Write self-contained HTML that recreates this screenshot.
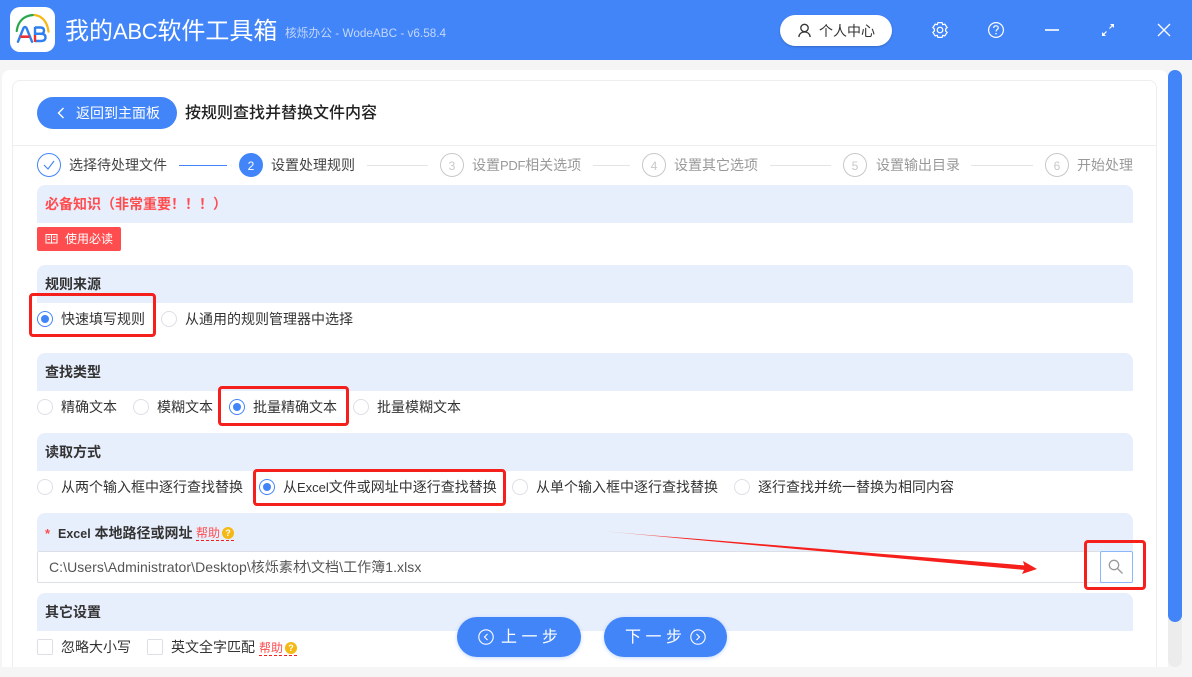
<!DOCTYPE html>
<html lang="zh">
<head>
<meta charset="utf-8">
<title>我的ABC软件工具箱</title>
<style>
html,body{margin:0;padding:0;width:1192px;height:677px;overflow:hidden;background:#f5f5f5}
body{position:relative;font-family:"Liberation Sans","Noto Sans CJK SC",sans-serif;color:#333;font-size:14px}
.a{position:absolute}
.t{position:absolute;white-space:nowrap;line-height:20px;height:20px}
.sec{position:absolute;left:37px;width:1096px;height:38px;background:#e8effc;border-radius:8px 8px 0 0}
.h{font-weight:bold;color:#333;font-size:14px}
.r{position:absolute;width:14px;height:14px;border:1px solid #dcdfe6;border-radius:50%;background:#fff}
.r.on{border-color:#4285f9}
.r.on:after{content:"";position:absolute;left:3px;top:3px;width:8px;height:8px;border-radius:50%;background:#4285f9}
.c{position:absolute;width:24px;height:24px;box-sizing:border-box;border:1px solid #c8c8c8;border-radius:50%;top:153px;color:#c8c8c8;font-size:12px;text-align:center;line-height:24px}
.l{position:absolute;top:165px;height:1px;background:#e4e4e4}
.g{color:#999}
.box{position:absolute;border:3px solid #f5201c;border-radius:4px;box-sizing:border-box}
.cb{position:absolute;top:639px;width:14px;height:14px;border:1px solid #dcdfe6;border-radius:2px;background:#fff}
.help{color:#ff4d4f;font-size:12px}
.dash{position:absolute;width:38px;height:0;border-top:1px dashed #f5201c}
.q{position:absolute;width:12px;height:12px;border-radius:50%;background:#f5b914;color:#fff;font-size:9px;font-weight:bold;text-align:center;line-height:12px}
.btn{position:absolute;top:617px;height:40px;border-radius:20px;background:#4285f9;color:#fff;box-shadow:0 1px 4px rgba(66,133,249,.3)}
.bt{font-size:16px;color:#fff;letter-spacing:4.5px}
</style>
</head>
<body>
<div class="a" style="left:0;top:0;width:1192px;height:60px;background:#4285f9"></div>
<svg class="a" style="left:10px;top:7px" width="45" height="46" viewBox="0 0 45 46">
<rect x="0" y="0" width="45" height="45" rx="10" fill="#fff"/>
<path d="M6.700 24C8 14 14 8.800 23 8" fill="none" stroke="#27a84a" stroke-width="2.200" stroke-linecap="round"/>
<path d="M24.500 8C32 8.800 37.500 15 38.500 24.700" fill="none" stroke="#f4b714" stroke-width="2.200" stroke-linecap="round"/>
<path d="M8 34.700L13.500 21Q15 19 16.500 21L22 34.700" fill="none" stroke="#2f7fee" stroke-width="2.400" stroke-linecap="round"/>
<path d="M10.500 29.700H19.500" fill="none" stroke="#ef2f2f" stroke-width="2.600"/>
<path d="M25 20.500H30.500Q34 20.500 34 23.800Q34 26.800 30.500 26.800H25" fill="none" stroke="#2f7fee" stroke-width="2.400"/>
<path d="M25 26.800H31Q35.500 26.800 35.500 30.300Q35.500 34 31 34H25" fill="none" stroke="#2f7fee" stroke-width="2.400"/>
<path d="M25 20V28" stroke="#2f7fee" stroke-width="2.400"/>
<path d="M25 28V35" stroke="#ef2f2f" stroke-width="2.400"/>
</svg>
<div class="t" style="left:65px;top:17px;height:30px;line-height:30px;font-size:24px;color:#fff">我的<span style="font-size:22px;letter-spacing:-.3px">ABC</span>软件工具箱</div>
<div class="t" style="left:285px;top:24px;font-size:11.750px;color:#c3d7fc">核烁办公 - WodeABC - v6.58.4</div>

<div class="a" style="left:780px;top:15px;width:112px;height:31px;background:#fff;border-radius:16px;box-shadow:0 1px 2px rgba(0,0,0,.2)"></div>
<svg class="a" style="left:797px;top:23px" width="15" height="15" viewBox="0 0 15 15" fill="none" stroke="#333" stroke-width="1.300"><circle cx="7.500" cy="5" r="3.700"/><path d="M1.800 14C2.200 10.800 4.500 9 7.500 9S12.800 10.800 13.200 14"/></svg>
<div class="t" style="left:819px;top:21px;font-size:14px;color:#333">个人中心</div>

<svg class="a" style="left:931px;top:21px" width="18" height="18" viewBox="0 0 18 18" fill="none" stroke="#fff" stroke-width="1.200" stroke-linejoin="round"><path d="M6.900 1.600H11.100L11.700 3.700L13.800 3.100L16.200 6.600L14.600 8V10L16.200 11.400L13.800 14.900L11.700 14.300L11.100 16.400H6.900L6.300 14.300L4.200 14.900L1.800 11.400L3.400 10V8L1.800 6.600L4.200 3.100L6.300 3.700Z"/><circle cx="9" cy="9" r="2.800"/></svg>
<svg class="a" style="left:987px;top:21px" width="18" height="18" viewBox="0 0 18 18" fill="none" stroke="#fff" stroke-width="1.200"><circle cx="9" cy="9" r="7.400"/><path d="M6.700 7C6.700 5.600 7.700 4.800 9 4.800C10.400 4.800 11.300 5.700 11.300 6.800C11.300 8.400 9 8.500 9 10.500"/><path d="M9 12V13.300" stroke-width="1.400"/></svg>
<div class="a" style="left:1045px;top:29px;width:14px;height:2px;background:#dce7fd"></div>
<svg class="a" style="left:1101px;top:23px" width="14" height="14" viewBox="0 0 14 14" fill="#fff" stroke="#fff"><path d="M2 12L5.500 8.500" stroke-width="1.200"/><path d="M8.500 5.500L12 2" stroke-width="1.200"/><path d="M1 9V13H5Z" stroke="none"/><path d="M9 1H13V5Z" stroke="none"/></svg>
<svg class="a" style="left:1157px;top:23px" width="14" height="14" viewBox="0 0 14 14" fill="none" stroke="#fff" stroke-width="1.300"><path d="M1 1L13 13M13 1L1 13"/></svg>

<div class="a" style="left:2px;top:70px;width:1166px;height:597px;background:#fff;border-radius:8px 8px 0 0"></div>
<div class="a" style="left:12px;top:80px;width:1145px;height:600px;box-sizing:border-box;border:1px solid #eee;border-radius:8px;background:#fff"></div>
<div class="a" style="left:0;top:667px;width:1192px;height:10px;background:#f5f5f5"></div>
<div class="a" style="left:13px;top:145px;width:1143px;height:1px;background:#eee"></div>

<div class="a" style="left:1168px;top:600px;width:14px;height:67px;background:#ececec;border-radius:0 0 7px 7px"></div>
<div class="a" style="left:1168px;top:70px;width:14px;height:552px;background:#4285f9;border-radius:7px"></div>

<div class="a" style="left:37px;top:97px;width:140px;height:32px;background:#4285f9;border-radius:16px"></div>
<svg class="a" style="left:56px;top:107px" width="10" height="12" viewBox="0 0 10 12" fill="none" stroke="#fff" stroke-width="1.400"><path d="M7.500 1L2.500 6L7.500 11"/></svg>
<div class="t" style="left:76px;top:103px;font-size:14px;color:#fff">返回到主面板</div>
<div class="t" style="left:185px;top:104px;font-size:16px;color:#222;font-weight:500">按规则查找并替换文件内容</div>

<div class="c" style="left:37px;border-color:#4285f9"></div>
<svg class="a" style="left:42px;top:159px" width="14" height="12" viewBox="0 0 14 12" fill="none" stroke="#4285f9" stroke-width="1.100"><path d="M2 6L6 10L12 2"/></svg>
<div class="t" style="left:69px;top:155px;color:#444">选择待处理文件</div>
<div class="l" style="left:179px;width:48px;background:#4285f9"></div>
<div class="c" style="left:239px;background:#4285f9;border-color:#4285f9;color:#fff">2</div>
<div class="t" style="left:271px;top:155px;color:#444">设置处理规则</div>
<div class="l" style="left:367px;width:61px"></div>
<div class="c" style="left:440px">3</div>
<div class="t g" style="left:472px;top:155px">设置<span style="font-size:13px;letter-spacing:-.3px">PDF</span>相关选项</div>
<div class="l" style="left:593px;width:37px"></div>
<div class="c" style="left:642px">4</div>
<div class="t g" style="left:674px;top:155px">设置其它选项</div>
<div class="l" style="left:770px;width:61px"></div>
<div class="c" style="left:843px">5</div>
<div class="t g" style="left:876px;top:155px">设置输出目录</div>
<div class="l" style="left:971px;width:62px"></div>
<div class="c" style="left:1045px">6</div>
<div class="t g" style="left:1077px;top:155px">开始处理</div>

<div class="sec" style="top:185px"></div>
<div class="t h" style="left:45px;top:194px;color:#ff4d4f">必备知识（非常重要！！！）</div>
<div class="a" style="left:37px;top:227px;width:84px;height:24px;background:#ff4d4f;border-radius:2px"></div>
<svg class="a" style="left:45px;top:233px" width="13" height="12" viewBox="0 0 13 12" fill="none" stroke="#fff" stroke-width="1"><path d="M1 1.500H6.500V10H1ZM6.500 1.500H12V10H6.500ZM2.500 4H5M2.500 6.500H5M8 4H10.500M8 6.500H10.500"/></svg>
<div class="t" style="left:65px;top:229px;font-size:12px;color:#fff">使用必读</div>

<div class="sec" style="top:265px"></div>
<div class="t h" style="left:45px;top:274px">规则来源</div>
<div class="r on" style="left:37px;top:311px"></div>
<div class="t" style="left:61px;top:309px">快速填写规则</div>
<div class="r" style="left:161px;top:311px"></div>
<div class="t" style="left:185px;top:309px">从通用的规则管理器中选择</div>

<div class="sec" style="top:353px"></div>
<div class="t h" style="left:45px;top:362px">查找类型</div>
<div class="r" style="left:37px;top:399px"></div>
<div class="t" style="left:61px;top:397px">精确文本</div>
<div class="r" style="left:133px;top:399px"></div>
<div class="t" style="left:157px;top:397px">模糊文本</div>
<div class="r on" style="left:229px;top:399px"></div>
<div class="t" style="left:253px;top:397px">批量精确文本</div>
<div class="r" style="left:353px;top:399px"></div>
<div class="t" style="left:377px;top:397px">批量模糊文本</div>

<div class="sec" style="top:433px"></div>
<div class="t h" style="left:45px;top:442px">读取方式</div>
<div class="r" style="left:37px;top:479px"></div>
<div class="t" style="left:61px;top:477px">从两个输入框中逐行查找替换</div>
<div class="r on" style="left:259px;top:479px"></div>
<div class="t" style="left:283px;top:477px">从<span style="font-size:13px">Excel</span>文件或网址中逐行查找替换</div>
<div class="r" style="left:512px;top:479px"></div>
<div class="t" style="left:536px;top:477px">从单个输入框中逐行查找替换</div>
<div class="r" style="left:734px;top:479px"></div>
<div class="t" style="left:758px;top:477px">逐行查找并统一替换为相同内容</div>

<div class="sec" style="top:513px"></div>
<div class="t" style="left:45px;top:524px;color:#ff4d4f;font-size:13px;font-weight:bold">*</div>
<div class="t h" style="left:58px;top:523px"><span style="font-size:12.500px">Excel</span> 本地路径或网址</div>
<div class="t help" style="left:196px;top:523px">帮助</div>
<div class="dash" style="left:196px;top:540px"></div>
<div class="q" style="left:222px;top:527px">?</div>

<div class="a" style="left:37px;top:551px;width:1096px;height:32px;box-sizing:border-box;border:1px solid #dcdfe6;border-radius:2px;background:#fff"></div>
<div class="t" style="left:49px;top:557px;font-size:14px;letter-spacing:.06px;color:#555">C:\Users\Administrator\Desktop\核烁素材\文档\工作簿1.xlsx</div>
<div class="a" style="left:1100px;top:551px;width:33px;height:32px;box-sizing:border-box;border:1px solid #8db7fb;border-radius:2px;background:#fff"></div>
<svg class="a" style="left:1108px;top:559px" width="16" height="16" viewBox="0 0 16 16" fill="none" stroke="#999" stroke-width="1.300"><circle cx="6" cy="6" r="4.700"/><path d="M9.500 9.500L14.500 14.500"/></svg>

<div class="sec" style="top:593px"></div>
<div class="t h" style="left:45px;top:602px">其它设置</div>
<div class="cb" style="left:37px"></div>
<div class="t" style="left:61px;top:637px">忽略大小写</div>
<div class="cb" style="left:147px"></div>
<div class="t" style="left:171px;top:637px">英文全字匹配</div>
<div class="t help" style="left:259px;top:638px">帮助</div>
<div class="dash" style="left:259px;top:655px"></div>
<div class="q" style="left:285px;top:642px">?</div>

<div class="box" style="left:29px;top:293px;width:127px;height:44px"></div>
<div class="box" style="left:218px;top:386px;width:131px;height:40px"></div>
<div class="box" style="left:253px;top:469px;width:253px;height:37px"></div>
<div class="box" style="left:1084px;top:540px;width:62px;height:50px"></div>

<svg class="a" style="left:595px;top:525px" width="450" height="55" viewBox="0 0 450 55">
<defs><linearGradient id="ag" x1="0" y1="0" x2="1" y2="0"><stop offset="0" stop-color="#f5201c" stop-opacity=".1"/><stop offset=".2" stop-color="#f5201c"/></linearGradient></defs>
<path d="M5 6L431 40.500L430 45Z" fill="url(#ag)"/>
<path d="M428 36L442 44L427 49L430 43Z" fill="#f5201c"/>
</svg>

<div class="btn" style="left:457px;width:124px"></div>
<svg class="a" style="left:478px;top:629px" width="16" height="16" viewBox="0 0 16 16" fill="none" stroke="#fff" stroke-width="1.100"><circle cx="8" cy="8" r="7.200"/><path d="M9.500 5L6.500 8L9.500 11"/></svg>
<div class="t bt" style="left:501px;top:628px">上一步</div>
<div class="btn" style="left:604px;width:123px"></div>
<div class="t bt" style="left:625px;top:628px">下一步</div>
<svg class="a" style="left:690px;top:629px" width="16" height="16" viewBox="0 0 16 16" fill="none" stroke="#fff" stroke-width="1.100"><circle cx="8" cy="8" r="7.200"/><path d="M6.500 5L9.500 8L6.500 11"/></svg>
</body>
</html>
